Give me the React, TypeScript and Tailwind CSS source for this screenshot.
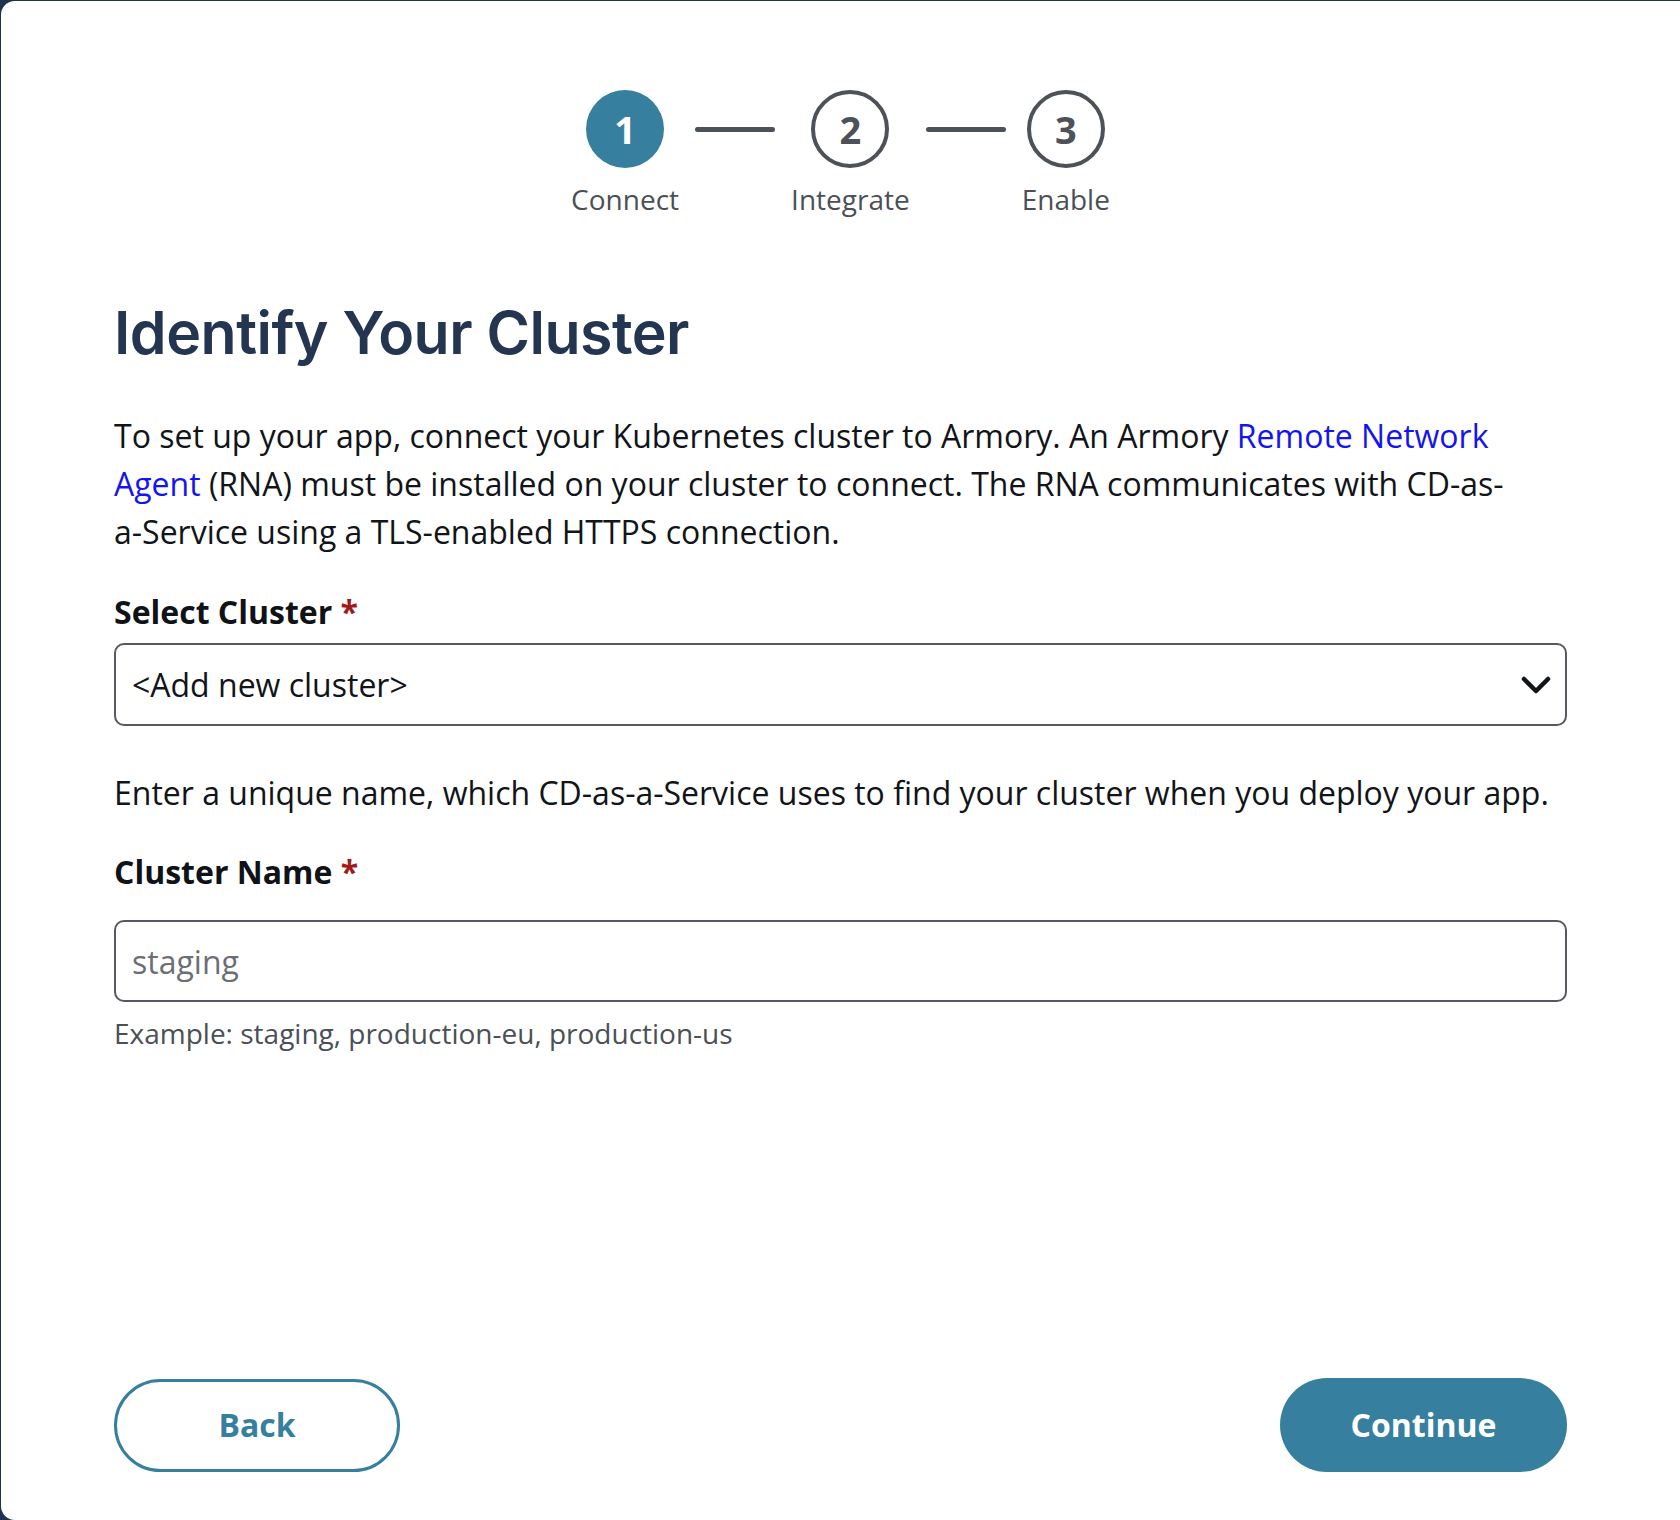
import React from "react";

const steps = [
  { n: "1", label: "Connect", active: true },
  { n: "2", label: "Integrate", active: false },
  { n: "3", label: "Enable", active: false },
];

function Stepper() {
  return (
    <div className="flex items-start justify-center">
      {steps.map((s, i) => (
        <React.Fragment key={s.n}>
          {i > 0 && <div className="mx-[16px] mt-[37px] h-[5px] w-[80px] rounded-full bg-[#4d5158]" />}
          <div className="flex flex-col items-center">
            {s.active ? (
              <div className="flex h-[78px] w-[78px] items-center justify-center rounded-full bg-[#377f9f] text-[38px] font-bold text-white">
                {s.n}
              </div>
            ) : (
              <div className="flex h-[78px] w-[78px] items-center justify-center rounded-full border-[4px] border-[#4d5158] text-[38px] font-bold text-[#4d5158]">
                {s.n}
              </div>
            )}
            <div className="mt-[12px] text-[28px] leading-[38px] text-[#4b5057]">{s.label}</div>
          </div>
        </React.Fragment>
      ))}
    </div>
  );
}

export default function App() {
  return (
    <div className="h-[1520px] w-[1680px] overflow-hidden bg-[#1e3350] pl-[1px] pt-[1px]" style={{ fontFamily: '"Open Sans", sans-serif' }}>
      <div className="flex h-[1519px] w-full flex-col rounded-l-[14px] bg-white px-[113px] pb-[48px] pt-[89px]">
        <Stepper />
        <h1
          className="mt-[79px] text-[59px] font-semibold leading-[72px] tracking-[-0.5px] text-[#233550]"
          style={{ fontFamily: "Inter, sans-serif" }}
        >
          Identify Your Cluster
        </h1>
        <p className="mt-[43px] max-w-[1405px] text-[32px] leading-[48px] text-[#111418]">
          To set up your app, connect your Kubernetes cluster to Armory. An Armory{" "}
          <a className="text-[#1414f0]" href="#">Remote Network Agent</a> (RNA) must be installed on your cluster to connect. The RNA
          communicates with CD-as-a-Service using a TLS-enabled HTTPS connection.
        </p>
        <label className="mt-[34px] block text-[32px] font-bold leading-[44px] text-[#0f1216]">
          Select Cluster <span className="text-[#a01a1a]">*</span>
        </label>
        <div className="mt-[9px] flex h-[83px] items-center justify-between rounded-[10px] border-2 border-[#565a60] pl-[16px] pr-[14px]">
          <span className="text-[32px] text-[#111418]">&lt;Add new cluster&gt;</span>
          <svg width="30" height="18" viewBox="0 0 30 18" fill="none">
            <polyline points="3,3 15,15 27,3" stroke="#111418" strokeWidth="4.5" strokeLinecap="round" strokeLinejoin="round" />
          </svg>
        </div>
        <p className="mt-[43px] text-[32px] leading-[48px] text-[#111418]">
          Enter a unique name, which CD-as-a-Service uses to find your cluster when you deploy your app.
        </p>
        <label className="mt-[33px] block text-[32px] font-bold leading-[44px] text-[#0f1216]">
          Cluster Name <span className="text-[#a01a1a]">*</span>
        </label>
        <input
          className="mt-[26px] h-[82px] w-full rounded-[10px] border-2 border-[#565a60] px-[16px] text-[32px] text-[#111418] outline-none placeholder:text-[#6b6f75]"
          placeholder="staging"
        />
        <p className="mt-[12px] text-[28px] leading-[38px] text-[#4b5057]">Example: staging, production-eu, production-us</p>
        <div className="mt-auto flex items-center justify-between">
          <button className="h-[93px] w-[286px] rounded-full border-[3px] border-[#377f9f] bg-white text-[32px] font-bold text-[#377f9f]">
            Back
          </button>
          <button className="h-[94px] w-[287px] rounded-full bg-[#377f9f] text-[32px] font-bold text-white">Continue</button>
        </div>
      </div>
    </div>
  );
}
